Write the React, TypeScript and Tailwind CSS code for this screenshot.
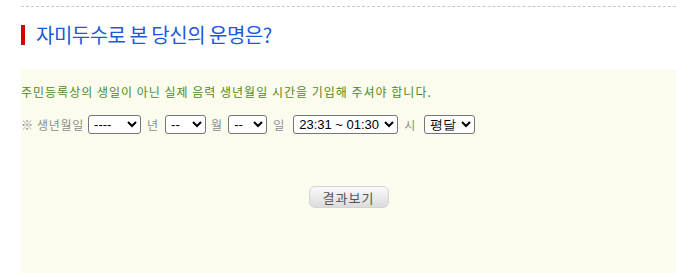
export default function App() {
  const sel =
    "h-[19px] border border-[#767676] rounded-[3px] bg-white text-[13px] text-black leading-none px-[1px] font-['Liberation_Sans',sans-serif]";

  return (
    <div
      className="w-[676px] h-[273px] overflow-hidden bg-white"
      style={{ fontFamily: '"Noto Sans CJK KR", "Liberation Sans", sans-serif' }}
    >
      <div className="ml-[21px] pt-[6px]">
        <div className="border-t border-dashed border-[#c8c8c8]" />
        <div className="mt-[18px] flex items-center h-[20px]">
          <div className="w-[4px] h-[20px] bg-[#d20000]" />
          <h2 className="ml-[11px] text-[20px] text-[#1d5ad6] leading-none tracking-[-0.5px]">
            자미두수로 본 당신의 운명은?
          </h2>
        </div>
        <div className="mt-[24px] h-[204px] bg-[#fbfcee] pt-[15px]">
          <p className="text-[12px] leading-[16px] text-[#4f8a1f] tracking-[1px]">
            주민등록상의 생일이 아닌 실제 음력 생년월일 시간을 기입해 주셔야 합니다.
          </p>
          <div className="mt-[15px] flex items-center text-[12px] text-[#8c8c8c]">
            <span className="tracking-[0.7px]">※ 생년월일</span>
            <select className={`${sel} ml-[4px] w-[53px]`} defaultValue="">
              <option value="">----</option>
            </select>
            <span className="ml-[6px]">년</span>
            <select className={`${sel} ml-[7px] w-[41px]`} defaultValue="">
              <option value="">--</option>
            </select>
            <span className="ml-[5px]">월</span>
            <select className={`${sel} ml-[6px] w-[39px]`} defaultValue="">
              <option value="">--</option>
            </select>
            <span className="ml-[6px]">일</span>
            <select className={`${sel} ml-[9px] w-[105px]`} defaultValue="0">
              <option value="0">23:31 ~ 01:30</option>
            </select>
            <span className="ml-[6px]">시</span>
            <select className={`${sel} ml-[9px] w-[51px]`} defaultValue="p">
              <option value="p">평달</option>
              <option value="y">윤달</option>
            </select>
          </div>
          <div className="mt-[52px] flex justify-center">
            <button className="w-[80px] h-[22px] rounded-[6px] border border-[#d4d4d4] bg-gradient-to-b from-[#fafafa] to-[#dcdcdc] text-[13px] text-[#555] leading-none tracking-[1px]">
              결과보기
            </button>
          </div>
        </div>
      </div>
    </div>
  );
}
